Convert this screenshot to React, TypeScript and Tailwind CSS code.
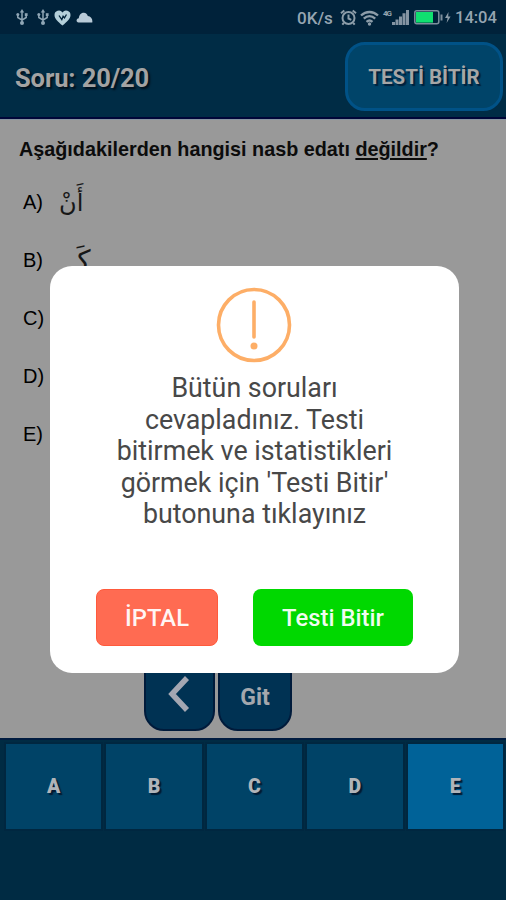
import React from "react";
import clsx from "clsx";

const answers = ["A", "B", "C", "D", "E"];

const options = [
  { key: "A", text: "أَنْ" },
  { key: "B", text: "كَـ" },
  { key: "C", text: "" },
  { key: "D", text: "" },
  { key: "E", text: "" },
];

const UsbIcon = () => (
  <svg width="12" height="17" viewBox="0 0 12 17" fill="none" stroke="#8fa6b5" strokeWidth="1.5">
    <path d="M6 3v11M1.8 5.5v3L6 11.2l4.2-2.7v-3" />
    <path d="M6 0L3.8 3.4h4.4z" fill="#8fa6b5" stroke="none" />
    <circle cx="1.8" cy="5.6" r="1.5" fill="#8fa6b5" stroke="none" />
    <path d="M8.8 4.2h2.8v2.8H8.8z" fill="#8fa6b5" stroke="none" />
    <circle cx="6" cy="14" r="2" fill="#8fa6b5" stroke="none" />
  </svg>
);

const HeartIcon = () => (
  <svg width="17" height="16" viewBox="0 0 17 16">
    <path d="M8.5 15.5C4 11.8.5 8.8.5 5A4.4 4.4 0 018.5 2.4 4.4 4.4 0 0116.5 5c0 3.8-3.5 6.8-8 10.5z" fill="#b4d0da" />
    <path d="M5 5.5l2.8 4.2 1.3-3.5 1.4 1.6 2-3.3" fill="none" stroke="#00233a" strokeWidth="1.3" />
  </svg>
);

const CloudIcon = () => (
  <svg width="17" height="11" viewBox="0 0 17 11" fill="#b9cbd8">
    <path d="M2.5 10.5C-.5 10 .3 6.6 2.8 6.3 3.2 2.5 5.5.8 7.8.8c2.2 0 3.5 1.5 4 3.2C15 4.4 16.8 7 16.3 10.5z" />
  </svg>
);

const AlarmIcon = () => (
  <svg width="17" height="17" viewBox="0 0 17 17" fill="none" stroke="#8c9da9" strokeWidth="2">
    <circle cx="8.5" cy="9" r="6" />
    <path d="M8.5 5.5V9.5l2.8 1.3M1 4.3l3.3-2.8M16 4.3l-3.3-2.8M3.8 14l-1.5 1.7M13.2 14l1.5 1.7" />
  </svg>
);

const WifiIcon = () => (
  <svg width="19" height="16" viewBox="0 0 19 16" fill="none" stroke="#8c9da9" strokeWidth="2.3">
    <path d="M1 5.5c5-4.7 12-4.7 17 0M3.8 8.7c3.5-3.3 7.9-3.3 11.4 0M6.5 11.8c1.9-1.6 4.1-1.6 6 0" />
    <circle cx="9.5" cy="14" r="1.7" fill="#8c9da9" stroke="none" />
  </svg>
);

const SignalIcon = () => (
  <svg width="17" height="15" viewBox="0 0 17 15" fill="#8494a2">
    <path d="M0 12h3v3H0zM3.5 9.5h3V15h-3zM7 6.5h3V15H7zM10.5 3.3h3V15h-3zM14 0h3v15h-3z" />
  </svg>
);

const BatteryIcon = () => (
  <svg width="38" height="15" viewBox="0 0 38 15" fill="none">
    <rect x=".8" y=".8" width="24" height="13" rx="2" stroke="#7d8f9d" strokeWidth="1.5" />
    <path d="M26.5 4.5h2v6h-2z" fill="#7d8f9d" />
    <path d="M2 2h17v10.6H2z" fill="#10e070" />
    <path d="M34.5 2l-3.5 6h2.6l-1 5 4-6.5h-2.4z" fill="#8c9da9" />
  </svg>
);

const StatusBar = () => (
  <div className="flex h-[34px] shrink-0 items-center justify-between bg-[#00223a] pl-4 pr-[9px] pt-px text-[#95a5b1]">
    <div className="flex items-center gap-[5px]">
      <div className="flex gap-[9px]">
        <UsbIcon />
        <UsbIcon />
      </div>
      <HeartIcon />
      <CloudIcon />
    </div>
    <div className="flex items-center">
      <span className="mt-0.5 w-[45px] whitespace-nowrap text-[17px] font-medium leading-none">0K/s</span>
      <span className="-ml-0.5"><AlarmIcon /></span>
      <span className="ml-[3px]"><WifiIcon /></span>
      <span className="-mt-2 ml-1 w-[9px] text-[8px] font-bold leading-none tracking-[-1px]">4G</span>
      <SignalIcon />
      <span className="ml-[5px] mr-[3px]"><BatteryIcon /></span>
      <span className="mt-0.5 w-[42px] whitespace-nowrap text-[16.5px] font-medium leading-none">14:04</span>
    </div>
  </div>
);

const Header = () => (
  <header className="flex h-[85px] shrink-0 items-center justify-between border-b-2 border-[#000638] bg-[#002c45] pl-[15px] pr-[3px]">
    <h1 className="mt-1.5 text-[25.5px] font-bold tracking-[-0.1px] text-[#a3a3a3] [text-shadow:2px_2px_2px_#00101c]">Soru: 20/20</h1>
    <button className="mt-0.5 h-[69px] w-[158px] rounded-[20px] border-[3px] border-[#005287] bg-[#004469] pt-0.5 text-[20.5px] font-bold text-[#a6a6a6] [text-shadow:2px_2px_1px_#00203b]">
      TESTİ BİTİR
    </button>
  </header>
);

const Question = () => (
  <main className="flex h-[619px] shrink-0 flex-col border-t border-[#8795a0] bg-[#999999] text-black">
    <h2 className="ml-[19px] mt-[17px] whitespace-nowrap font-['Liberation_Sans',sans-serif] text-[19.8px] font-bold leading-6 text-[#0c0c0c]">
      Aşağıdakilerden hangisi nasb edatı <span className="underline decoration-2 underline-offset-2">değildir</span>?
    </h2>
    <div className="mt-3 flex flex-col">
      {options.map((option) => (
        <div key={option.key} className="flex h-[58px] items-center pl-[23px]">
          <span className="w-9 font-['Liberation_Sans',sans-serif] text-[20px]">{option.key})</span>
          <span
            dir="rtl"
            className={clsx(
              "font-['DejaVu_Sans',sans-serif] leading-none text-[#171717]",
              option.key === "B" ? "ml-2.5 pt-0.5 text-[28px]" : "pt-0.5 text-[24px]"
            )}
          >
            {option.text}
          </span>
        </div>
      ))}
    </div>
    <div className="mb-[7px] ml-36 mt-auto flex gap-[3px]">
      <button className="flex h-20 w-[71px] items-center justify-center rounded-[20px] border-2 border-[#001b3b] bg-[#003253] pt-1.5">
        <svg width="24" height="36" viewBox="0 0 24 36" fill="none" stroke="#a4a7b2" strokeWidth="5.5">
          <path d="M19 2L4 18 19 34" />
        </svg>
      </button>
      <button className="h-20 w-[74px] rounded-[20px] border-2 border-[#001b3b] bg-[#003253] pt-3.5 text-[23px] font-bold text-[#a4a7ad]">Git</button>
    </div>
  </main>
);

const AnswerBar = () => (
  <footer className="flex-1 border-t-2 border-[#001b3f] bg-[#002b43] pl-1 pr-px pt-0.5">
    <div className="grid grid-cols-5 gap-px">
      {answers.map((answer) => (
        <button
          key={answer}
          className={clsx(
            "h-[89px] border-2 border-[#002740] pt-px text-[19.5px] font-black text-[#b0b4b9] [text-shadow:2px_2px_1px_#001a33]",
            answer === "E" ? "bg-[#006298]" : "bg-[#004367]"
          )}
        >
          {answer}
        </button>
      ))}
    </div>
  </footer>
);

const FinishDialog = () => (
  <div className="absolute inset-0 flex justify-center pt-[266px]">
    <div role="dialog" className="ml-[3px] flex h-[407px] w-[409px] flex-col items-center rounded-[22px] bg-white pt-[21px]">
      <svg className="-ml-px" width="76" height="76" viewBox="0 0 76 76" fill="none" stroke="#fdae67" strokeWidth="3.6">
        <circle cx="38" cy="38" r="35.5" />
        <path d="M38 15v35" strokeLinecap="round" />
        <circle cx="38" cy="59" r="3.5" fill="#fdae67" stroke="none" />
      </svg>
      <p className="mt-2.5 whitespace-nowrap text-center text-[26.8px] leading-[31.6px] text-[#484848]">
        Bütün soruları
        <br />
        cevapladınız. Testi
        <br />
        bitirmek ve istatistikleri
        <br />
        görmek için 'Testi Bitir'
        <br />
        butonuna tıklayınız
      </p>
      <div className="mb-[27px] mt-auto flex gap-[35px]">
        <button className="h-[57px] w-[122px] rounded-lg border border-[#ff5a3c] bg-[#ff6b52] pt-0.5 text-[23.8px] font-medium text-white/95">İPTAL</button>
        <button className="h-[57px] w-[160px] rounded-lg bg-[#00d800] pt-0.5 text-[23.8px] font-medium text-white/95">Testi Bitir</button>
      </div>
    </div>
  </div>
);

const App: React.FC = () => {
  return (
    <div className="relative flex h-[900px] w-[506px] flex-col overflow-hidden font-['Roboto',sans-serif]">
      <StatusBar />
      <Header />
      <Question />
      <AnswerBar />
      <FinishDialog />
    </div>
  );
};

export default App;
